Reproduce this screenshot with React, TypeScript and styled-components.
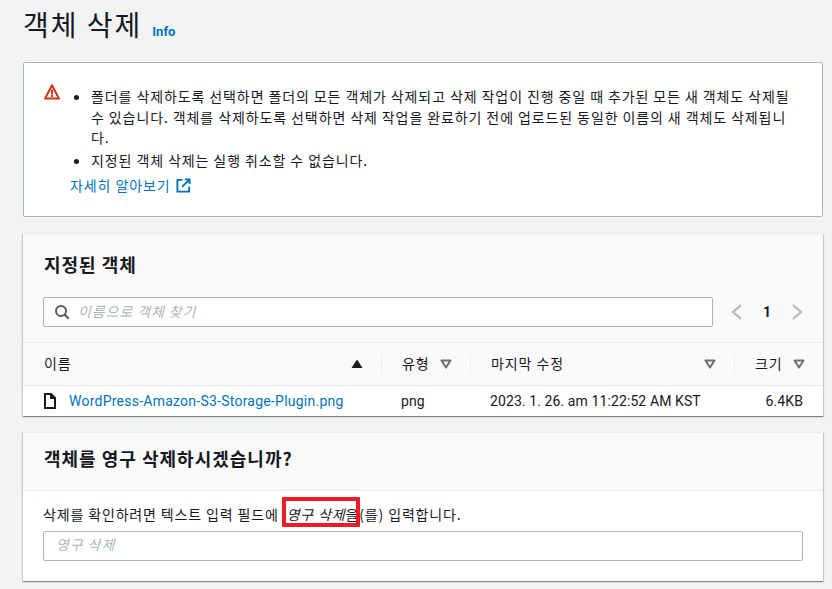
import styled, { createGlobalStyle } from "styled-components";

const GlobalStyle = createGlobalStyle`
  html, body {
    margin: 0;
    padding: 0;
    background: #f2f3f3;
    overflow: hidden;
  }
  body {
    font-family: "Noto Sans CJK KR", "Noto Sans", sans-serif;
    font-size: 14px;
    color: #16191f;
  }
`;

const Page = styled.main`
  width: 832px;
  height: 589px;
  box-sizing: border-box;
  padding: 0 9px 0 23px;
  display: flex;
  flex-direction: column;
  overflow: hidden;
`;

const TitleRow = styled.div`
  height: 62px;
  box-sizing: border-box;
  padding-top: 3px;
  display: flex;
  align-items: flex-start;
  gap: 10px;
`;

const Title = styled.h1`
  margin: 0;
  font-size: 28px;
  line-height: 42px;
  font-weight: 400;
  letter-spacing: 2px;
  color: #16191f;
`;

const InfoLink = styled.a`
  margin-top: 20px;
  font-family: "Roboto", sans-serif;
  font-size: 13px;
  line-height: 18px;
  font-weight: 700;
  color: #0073bb;
`;

const Alert = styled.section`
  height: 155px;
  box-sizing: border-box;
  background: #fff;
  border: 1px solid #aab7b8;
  border-radius: 2px;
  padding: 23px 20px 0 20px;
  display: flex;
  gap: 10px;
  letter-spacing: 0.9px;
`;

const AlertIcon = styled.svg`
  width: 16px;
  height: 16px;
  flex: none;
  margin-top: -2px;
`;

const AlertBody = styled.div`
  flex: 1;
  min-width: 0;
  line-height: 20.5px;
`;

const AlertList = styled.ul`
  margin: 0;
  padding: 0 0 0 21px;
`;

const AlertItem = styled.li`
  margin-bottom: 2px;
  padding-right: 2px;
  word-break: break-all;
`;

const MoreLink = styled.a`
  display: inline-flex;
  align-items: center;
  gap: 5px;
  margin-top: 3px;
  color: #0073bb;
`;

const Card = styled.section<{ $height: number }>`
  height: ${(props) => props.$height}px;
  box-sizing: border-box;
  background: #fff;
  box-shadow: 0 1px 1px 0 rgba(0, 28, 36, 0.3), 1px 1px 1px 0 rgba(0, 28, 36, 0.15),
    -1px 1px 1px 0 rgba(0, 28, 36, 0.15);
  border-top: 1px solid #eaeded;
  overflow: hidden;
`;

const ObjectsCard = styled(Card)`
  margin-top: 16px;
`;

const ConfirmCard = styled(Card)`
  margin-top: 16px;
`;

const CardHeader = styled.header`
  background: #fafafa;
  padding: 15px 20px 0 21px;
`;

const CardTitle = styled.h2`
  margin: 0;
  font-size: 18px;
  line-height: 30px;
  font-weight: 700;
  letter-spacing: 1px;
  color: #16191f;
`;

const FilterRow = styled.div`
  display: flex;
  align-items: center;
  margin: 18px 0 0 -1px;
  padding-bottom: 15px;
`;

const InputBox = styled.div`
  height: 30px;
  box-sizing: border-box;
  background: #fff;
  border: 1px solid #aab7b8;
  border-radius: 2px;
  display: flex;
  align-items: center;
  padding-left: 10px;
  gap: 8px;
  color: #aab7b8;
  font-style: italic;
  letter-spacing: 0.9px;
`;

const SearchBox = styled(InputBox)`
  width: 670px;
`;

const ConfirmBox = styled(InputBox)`
  margin-top: 6px;
  padding-left: 12px;
`;

const Placeholder = styled.span<{ $lift: number }>`
  padding-bottom: ${(props) => props.$lift}px;
`;

const Pager = styled.div`
  flex: 1;
  display: flex;
  align-items: center;
  padding-left: 18px;
  gap: 20px;
  font-family: "Roboto", sans-serif;
  font-weight: 700;
  font-size: 14px;
`;

const Chevron = styled.svg`
  width: 12px;
  height: 16px;
  flex: none;
`;

const TableHead = styled.div`
  display: grid;
  grid-template-columns: 358px 89px 264px 1fr;
  height: 44px;
  box-sizing: border-box;
  background: #fafafa;
  border-top: 1px solid #eaeded;
  border-bottom: 1px solid #eaeded;
  align-items: center;
  letter-spacing: 0.9px;
`;

const HeadCell = styled.div<{ $divider?: boolean }>`
  height: 20px;
  box-sizing: border-box;
  padding: 0 18px 0 ${(props) => (props.$divider ? 20 : 21)}px;
  border-left: ${(props) => (props.$divider ? "1px solid #eaeded" : "none")};
  display: flex;
  align-items: center;
  justify-content: space-between;
  line-height: 18px;
`;

const HeadLabel = styled.span`
  padding-bottom: 3px;
`;

const SortIcon = styled.svg`
  width: 12px;
  height: 10px;
  flex: none;
`;

const TableRow = styled.div`
  display: grid;
  grid-template-columns: 358px 89px 264px 1fr;
  height: 30px;
  align-items: center;
  font-family: "Roboto", sans-serif;
  letter-spacing: 0.1px;
`;

const NameCell = styled.div`
  padding-left: 21px;
  display: flex;
  align-items: center;
  gap: 13px;
`;

const FileName = styled.a`
  color: #0073bb;
  letter-spacing: 0.24px;
`;

const DataCell = styled.div<{ $right?: boolean }>`
  padding: ${(props) => (props.$right ? "0 20px 0 0" : "0 0 0 20px")};
  text-align: ${(props) => (props.$right ? "right" : "left")};
`;

const ConfirmHeader = styled(CardHeader)`
  height: 58px;
  box-sizing: border-box;
  padding-top: 10px;
  border-bottom: 1px solid #eaeded;
`;

const ConfirmBody = styled.div`
  padding: 13px 20px 0 20px;
  line-height: 21px;
  letter-spacing: 0.85px;
`;

const Marked = styled.span`
  position: relative;
  margin-left: 4px;
`;

const MarkedWords = styled.em`
  font-style: italic;
`;

const RedBox = styled.span`
  position: absolute;
  left: -5px;
  right: -1px;
  top: -7px;
  bottom: -3px;
  border: 4px solid #ed1c24;
  border-radius: 1px;
`;

const SortDown = () => (
  <SortIcon viewBox="0 0 12 10">
    <path d="M1.5 1.5h9L6 8.5z" fill="none" stroke="#687078" strokeWidth="2" strokeLinejoin="round" />
  </SortIcon>
);

const App = () => {
  return (
    <>
      <GlobalStyle />
      <Page>
        <TitleRow>
          <Title>객체 삭제</Title>
          <InfoLink>Info</InfoLink>
        </TitleRow>

        <Alert>
          <AlertIcon viewBox="0 0 16 16">
            <path d="M8 1.2 15 14.6H1z" fill="none" stroke="#d13212" strokeWidth="2" strokeLinejoin="round" />
            <rect x="7" y="5.5" width="2" height="5" fill="#d13212" />
            <rect x="7" y="11" width="2" height="2" fill="#d13212" />
          </AlertIcon>
          <AlertBody>
            <AlertList>
              <AlertItem>
                폴더를 삭제하도록 선택하면 폴더의 모든 객체가 삭제되고 삭제 작업이 진행 중일 때 추가된 모든 새 객체도 삭제될 수 있습니다. 객체를 삭제하도록 선택하면 삭제 작업을 완료하기 전에 업로드된 동일한 이름의 새 객체도 삭제됩니다.
              </AlertItem>
              <AlertItem>지정된 객체 삭제는 실행 취소할 수 없습니다.</AlertItem>
            </AlertList>
            <MoreLink>
              자세히 알아보기
              <svg width="15" height="15" viewBox="0 0 16 16" fill="none" stroke="#0073bb" strokeWidth="2">
                <path d="M7 2H1.5v12.5H14V9" />
                <path d="M9.5 1.5H14.5V6.5M14 2 6.5 9.5" />
              </svg>
            </MoreLink>
          </AlertBody>
        </Alert>

        <ObjectsCard $height={183}>
          <CardHeader>
            <CardTitle>지정된 객체</CardTitle>
            <FilterRow>
              <SearchBox>
                <svg width="16" height="16" viewBox="0 0 16 16" fill="none" stroke="#545b64" strokeWidth="2">
                  <circle cx="7" cy="7" r="5" />
                  <path d="m10.7 10.7 4 4" />
                </svg>
                <Placeholder $lift={2}>이름으로 객체 찾기</Placeholder>
              </SearchBox>
              <Pager>
                <Chevron viewBox="0 0 12 16">
                  <path d="M10 1 2 8l8 7" fill="none" stroke="#aab7b8" strokeWidth="2" />
                </Chevron>
                <span>1</span>
                <Chevron viewBox="0 0 12 16">
                  <path d="m2 1 8 7-8 7" fill="none" stroke="#aab7b8" strokeWidth="2" />
                </Chevron>
              </Pager>
            </FilterRow>
          </CardHeader>
          <TableHead>
            <HeadCell>
              <HeadLabel>이름</HeadLabel>
              <SortIcon viewBox="0 0 12 10">
                <path d="M6 .5 11.5 9H.5z" fill="#16191f" />
              </SortIcon>
            </HeadCell>
            <HeadCell $divider>
              <HeadLabel>유형</HeadLabel>
              <SortDown />
            </HeadCell>
            <HeadCell $divider>
              <HeadLabel>마지막 수정</HeadLabel>
              <SortDown />
            </HeadCell>
            <HeadCell $divider>
              <HeadLabel>크기</HeadLabel>
              <SortDown />
            </HeadCell>
          </TableHead>
          <TableRow>
            <NameCell>
              <svg width="12" height="16" viewBox="0 0 12 16" fill="none" stroke="#16191f" strokeWidth="2">
                <path d="M1 1h6l4 4v10H1z" />
                <path d="M7 1v4h4" />
              </svg>
              <FileName>WordPress-Amazon-S3-Storage-Plugin.png</FileName>
            </NameCell>
            <DataCell>png</DataCell>
            <DataCell>2023. 1. 26. am 11:22:52 AM KST</DataCell>
            <DataCell $right>6.4KB</DataCell>
          </TableRow>
        </ObjectsCard>

        <ConfirmCard $height={149}>
          <ConfirmHeader>
            <CardTitle>객체를 영구 삭제하시겠습니까?</CardTitle>
          </ConfirmHeader>
          <ConfirmBody>
            삭제를 확인하려면 텍스트 입력 필드에{" "}
            <Marked>
              <MarkedWords>영구 삭제</MarkedWords>을
              <RedBox />
            </Marked>
            (를) 입력합니다.
            <ConfirmBox>
              <Placeholder $lift={3}>영구 삭제</Placeholder>
            </ConfirmBox>
          </ConfirmBody>
        </ConfirmCard>
      </Page>
    </>
  );
};

export default App;
